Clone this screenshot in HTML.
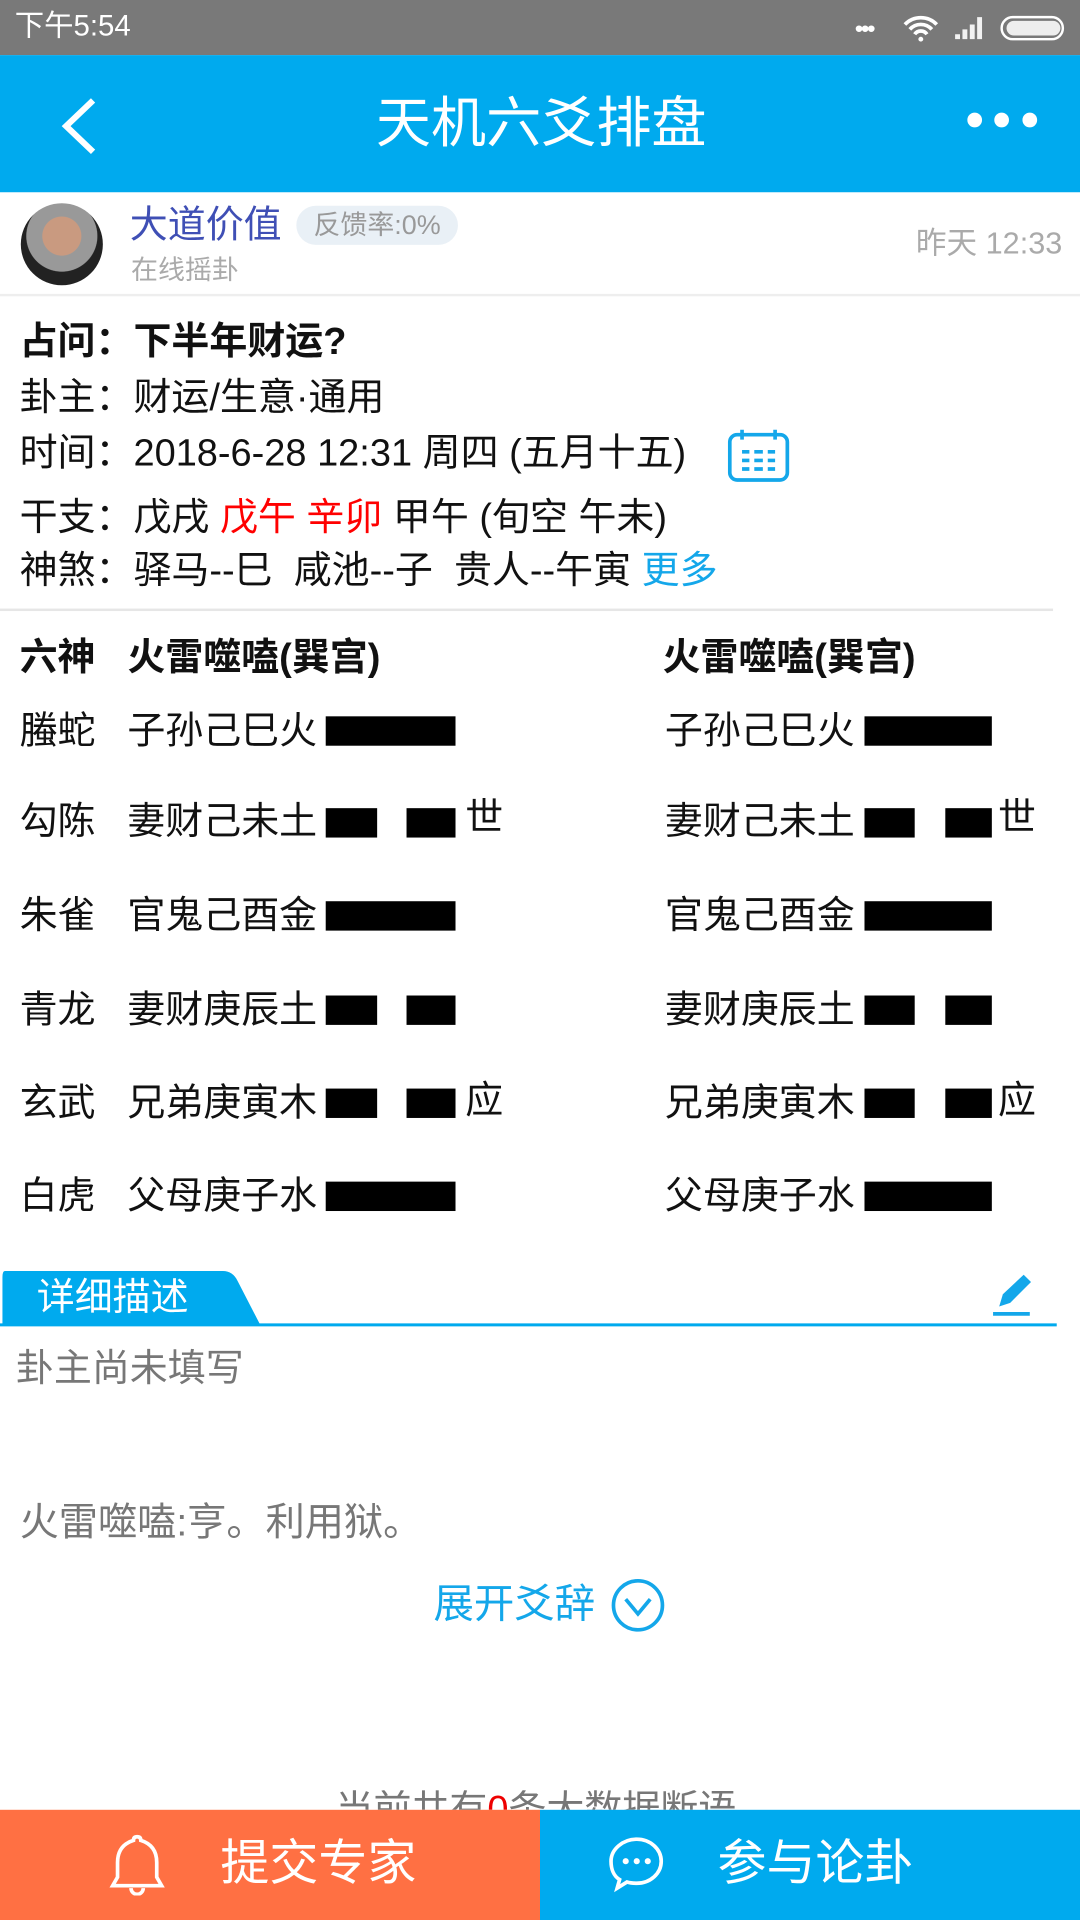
<!DOCTYPE html>
<html><head><meta charset="utf-8"><style>
*{margin:0;padding:0;box-sizing:border-box}
html,body{width:1080px;height:1920px;overflow:hidden;background:#fff}
#w{position:absolute;left:0;top:0;width:882px;height:1568px;transform:scale(1.22449);transform-origin:0 0;font-family:"Liberation Sans","Noto Sans CJK SC",sans-serif;color:#111}
.a{position:absolute;white-space:nowrap;line-height:1}
.bar{position:absolute;background:#000;height:24px}
.t{font-size:31px}
</style></head><body><div id="w">
<div class="a" style="left:0;top:0;width:882px;height:45px;background:#797979"></div>
<div class="a" style="left:12px;top:10px;font-size:24px;color:#fff">下午5:54</div>
<div class="a" style="left:698px;top:14px;font-size:20px;color:#fff;letter-spacing:-2px">•••</div>
<svg class="a" style="left:736px;top:12px" width="32" height="22" viewBox="0 0 32 22"><path d="M3 8a18 18 0 0 1 26 0M7 12a12 12 0 0 1 18 0M11 16a6 6 0 0 1 10 0" stroke="#fff" stroke-width="3" fill="none"/><circle cx="16" cy="20" r="2" fill="#fff"/></svg>
<svg class="a" style="left:778px;top:12px" width="26" height="22"><path d="M2 20h4v-4H2zM8 20h4v-8H8zM14 20h4v-12h-4zM20 20h4V2h-4z" fill="#fff" opacity=".9"/></svg>
<div class="a" style="left:817px;top:13px;width:52px;height:20px;border:2px solid #fff;border-radius:10px"></div>
<div class="a" style="left:822px;top:17px;width:44px;height:12px;background:#eee;border-radius:6px"></div>
<div class="a" style="left:0;top:45px;width:882px;height:112px;background:#00aaee"></div>
<svg class="a" style="left:46px;top:78px" width="36" height="50"><path d="M30 4L8 25l22 21" stroke="#fff" stroke-width="5" fill="none"/></svg>
<div class="a" style="left:307px;top:78px;font-size:45px;color:#fff">天机六爻排盘</div>
<div class="a" style="left:790px;top:92px;width:12px;height:12px;border-radius:6px;background:#fff"></div>
<div class="a" style="left:812px;top:92px;width:12px;height:12px;border-radius:6px;background:#fff"></div>
<div class="a" style="left:835px;top:92px;width:12px;height:12px;border-radius:6px;background:#fff"></div>
<div class="a" style="left:17px;top:166px;width:67px;height:67px;border-radius:50%;background:radial-gradient(circle at 50% 40%,#c99a80 0 30%,#999 31% 55%,#222 56%)"></div>
<div class="a" style="left:106px;top:168px;font-size:31px;color:#3f4fb5">大道价值</div>
<div class="a" style="left:242px;top:168px;width:132px;height:32px;border-radius:16px;background:#e9f0f6"></div>
<div class="a" style="left:256px;top:173px;font-size:22px;color:#999">反馈率:0%</div>
<div class="a" style="left:107px;top:210px;font-size:22px;color:#aaa">在线摇卦</div>
<div class="a" style="left:748px;top:187px;font-size:25px;color:#aaa">昨天 12:33</div>
<div class="a" style="left:0;top:240px;width:882px;height:2px;background:#eee"></div>
<div class="a t" style="left:16px;top:263px;font-weight:bold">占问：下半年财运?</div>
<div class="a t" style="left:16px;top:309px">卦主：财运/生意·通用</div>
<div class="a t" style="left:16px;top:354px">时间：2018-6-28 12:31 周四 (五月十五)</div>
<svg class="a" style="left:594px;top:349px" width="52" height="46" viewBox="0 0 52 46"><rect x="2" y="6" width="47" height="37" rx="6" fill="none" stroke="#14a7ea" stroke-width="3"/><path d="M12 2v8M39 2v8" stroke="#14a7ea" stroke-width="3"/><path d="M12 20h6M22 20h7M33 20h6M12 27h6M22 27h7M33 27h6M12 34h6M22 34h7M33 34h6" stroke="#14a7ea" stroke-width="3"/></svg>
<div class="a t" style="left:16px;top:407px">干支：戊戌 <span style="color:#f00">戊午 辛卯</span> 甲午 (旬空 午未)</div>
<div class="a t" style="left:16px;top:450px">神煞：驿马--巳&nbsp; 咸池--子&nbsp; 贵人--午寅 <span style="color:#14a7ea">更多</span></div>
<div class="a" style="left:0;top:497px;width:860px;height:2px;background:#e6e6e6"></div>
<div class="a t" style="left:16px;top:521px;font-weight:bold">六神</div><div class="a t" style="left:104px;top:521px;font-weight:bold">火雷噬嗑(巽宫)</div>
<div class="a t" style="left:541px;top:521px;font-weight:bold">火雷噬嗑(巽宫)</div>

<div class="a t" style="left:16px;top:581px">螣蛇</div><div class="a t" style="left:104px;top:581px">子孙己巳火</div><div class="bar" style="left:266px;top:585px;width:106px"></div>
<div class="a t" style="left:543px;top:581px">子孙己巳火</div><div class="bar" style="left:706px;top:585px;width:104px"></div>

<div class="a t" style="left:16px;top:655px">勾陈</div><div class="a t" style="left:104px;top:655px">妻财己未土</div><div class="bar" style="left:266px;top:660px;width:42px"></div><div class="bar" style="left:332px;top:660px;width:40px"></div><div class="a t" style="left:380px;top:652px">世</div>
<div class="a t" style="left:543px;top:655px">妻财己未土</div><div class="bar" style="left:706px;top:660px;width:41px"></div><div class="bar" style="left:772px;top:660px;width:38px"></div><div class="a t" style="left:815px;top:652px">世</div>

<div class="a t" style="left:16px;top:732px">朱雀</div><div class="a t" style="left:104px;top:732px">官鬼己酉金</div><div class="bar" style="left:266px;top:736px;width:106px"></div>
<div class="a t" style="left:543px;top:732px">官鬼己酉金</div><div class="bar" style="left:706px;top:736px;width:104px"></div>

<div class="a t" style="left:16px;top:809px">青龙</div><div class="a t" style="left:104px;top:809px">妻财庚辰土</div><div class="bar" style="left:266px;top:813px;width:42px"></div><div class="bar" style="left:332px;top:813px;width:40px"></div>
<div class="a t" style="left:543px;top:809px">妻财庚辰土</div><div class="bar" style="left:706px;top:813px;width:41px"></div><div class="bar" style="left:772px;top:813px;width:38px"></div>

<div class="a t" style="left:16px;top:885px">玄武</div><div class="a t" style="left:104px;top:885px">兄弟庚寅木</div><div class="bar" style="left:266px;top:889px;width:42px"></div><div class="bar" style="left:332px;top:889px;width:40px"></div><div class="a t" style="left:380px;top:883px">应</div>
<div class="a t" style="left:543px;top:885px">兄弟庚寅木</div><div class="bar" style="left:706px;top:889px;width:41px"></div><div class="bar" style="left:772px;top:889px;width:38px"></div><div class="a t" style="left:815px;top:883px">应</div>

<div class="a t" style="left:16px;top:961px">白虎</div><div class="a t" style="left:104px;top:961px">父母庚子水</div><div class="bar" style="left:266px;top:965px;width:106px"></div>
<div class="a t" style="left:543px;top:961px">父母庚子水</div><div class="bar" style="left:706px;top:965px;width:104px"></div>

<svg class="a" style="left:0;top:1037px" width="882" height="48"><path d="M4 1h178q8 0 12 8l18 35H2V6q0-5 2-5z" fill="#00aaee"/><path d="M0 45h863" stroke="#00aaee" stroke-width="2.5"/></svg>
<div class="a" style="left:30px;top:1044px;font-size:31px;color:#fff">详细描述</div>
<svg class="a" style="left:808px;top:1039px" width="40" height="38"><path d="M8 28l3-10L28 2l6 6-17 17z" fill="#14a7ea"/><path d="M3 34h30" stroke="#14a7ea" stroke-width="3"/></svg>
<div class="a" style="left:13px;top:1102px;font-size:31px;color:#777">卦主尚未填写</div>
<div class="a" style="left:16px;top:1227px;font-size:32px;color:#777">火雷噬嗑:亨。利用狱。</div>
<div class="a" style="left:354px;top:1293px;font-size:33px;color:#14a7ea">展开爻辞</div>
<svg class="a" style="left:498px;top:1288px" width="46" height="46"><circle cx="23" cy="23" r="20" fill="none" stroke="#14a7ea" stroke-width="3"/><path d="M13 18l10 12 10-12" fill="none" stroke="#14a7ea" stroke-width="3"/></svg>
<div class="a" style="left:0;top:1462px;width:882px;height:16px;overflow:hidden"><div class="a" style="left:274px;top:0;font-size:31px;color:#777">当前共有<span style="color:#e00">0</span>条大数据断语</div></div>
<div class="a" style="left:0;top:1478px;width:441px;height:90px;background:#ff7043"></div>
<div class="a" style="left:441px;top:1478px;width:441px;height:90px;background:#00aaee"></div>
<svg class="a" style="left:88px;top:1496px" width="48" height="52"><path d="M24 4q3 0 3 3 13 4 13 18v12l4 7H4l4-7V25q0-14 13-18q0-3 3-3z" fill="none" stroke="#fff" stroke-width="3"/><path d="M19 46a5 5 0 0 0 10 0" fill="none" stroke="#fff" stroke-width="3"/></svg>
<div class="a" style="left:180px;top:1502px;font-size:40px;color:#fff">提交专家</div>
<svg class="a" style="left:494px;top:1496px" width="52" height="52"><path d="M26 6c11 0 20 8 20 18s-9 18-20 18c-3 0-5 0-8-1l-8 5 2-7C7 36 5 30 5 24 5 14 15 6 26 6z" fill="none" stroke="#fff" stroke-width="3"/><circle cx="17" cy="24" r="2.5" fill="#fff"/><circle cx="26" cy="24" r="2.5" fill="#fff"/><circle cx="35" cy="24" r="2.5" fill="#fff"/></svg>
<div class="a" style="left:586px;top:1502px;font-size:40px;color:#fff">参与论卦</div>
</div></body></html>
